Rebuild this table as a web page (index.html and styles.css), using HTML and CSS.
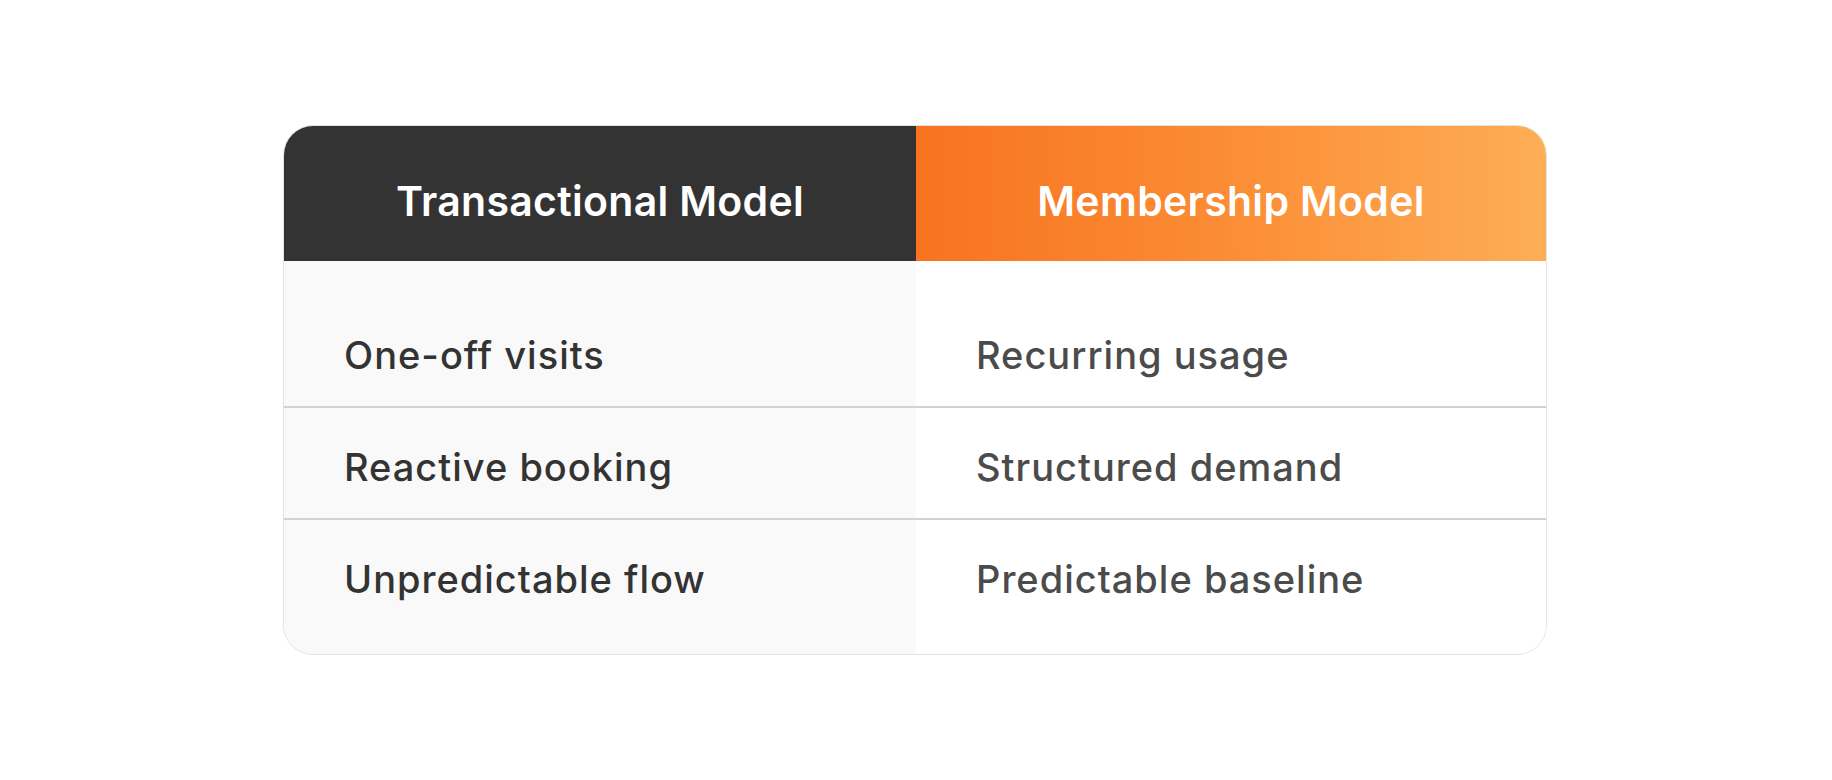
FILE: index.html
```html
<!DOCTYPE html>
<html lang="en">
<head>
<meta charset="utf-8">
<title>Transactional vs Membership</title>
<link rel="stylesheet" href="styles.css">
</head>
<body>
<main class="page">
  <section class="compare">
    <div class="col col-left">
      <div class="head head-dark">Transactional Model</div>
      <div class="rows">
        <div class="row">One-off visits</div>
        <div class="row">Reactive booking</div>
        <div class="row">Unpredictable flow</div>
      </div>
    </div>
    <div class="col col-right">
      <div class="head head-orange">Membership Model</div>
      <div class="rows">
        <div class="row">Recurring usage</div>
        <div class="row">Structured demand</div>
        <div class="row">Predictable baseline</div>
      </div>
    </div>
  </section>
</main>
</body>
</html>
```

FILE: styles.css
```css
* { box-sizing: border-box; }
html, body { margin: 0; padding: 0; }
body {
  background: #ffffff;
  font-family: Inter, "Noto Sans", "Liberation Sans", sans-serif;
}
.page {
  width: 1832px;
  height: 780px;
  display: flex;
  align-items: center;
  justify-content: center;
}
.compare {
  width: 1264px;
  display: grid;
  grid-template-columns: 632px 630px;
  border: 1px solid #e3e3e3;
  border-radius: 30px;
  overflow: hidden;
  margin-left: -2px;
}
.col { display: flex; flex-direction: column; }
.col-left { background: #f9f9f9; }
.col-right { background: #ffffff; }
.head {
  height: 135px;
  padding-top: 14px;
  display: flex;
  align-items: center;
  justify-content: center;
  color: #ffffff;
  font-size: 41px;
  font-weight: 600;
  letter-spacing: 0.3px;
}
.head-dark { background: #333333; }
.head-orange { background: linear-gradient(90deg, #f8731f 0%, #fb8a33 45%, #fdae56 100%); }
.rows {
  padding: 35px 0 24px;
  display: flex;
  flex-direction: column;
}
.row {
  height: 112px;
  padding-top: 8px;
  display: flex;
  align-items: center;
  padding-left: 60px;
  font-size: 38px;
  font-weight: 500;
  letter-spacing: 1px;
  border-bottom: 2px solid #d2d2d2;
}
.row:last-child { height: 110px; border-bottom: none; }
.col-left .row { color: #333333; }
.col-right .row { color: #4b4b4b; }
```
